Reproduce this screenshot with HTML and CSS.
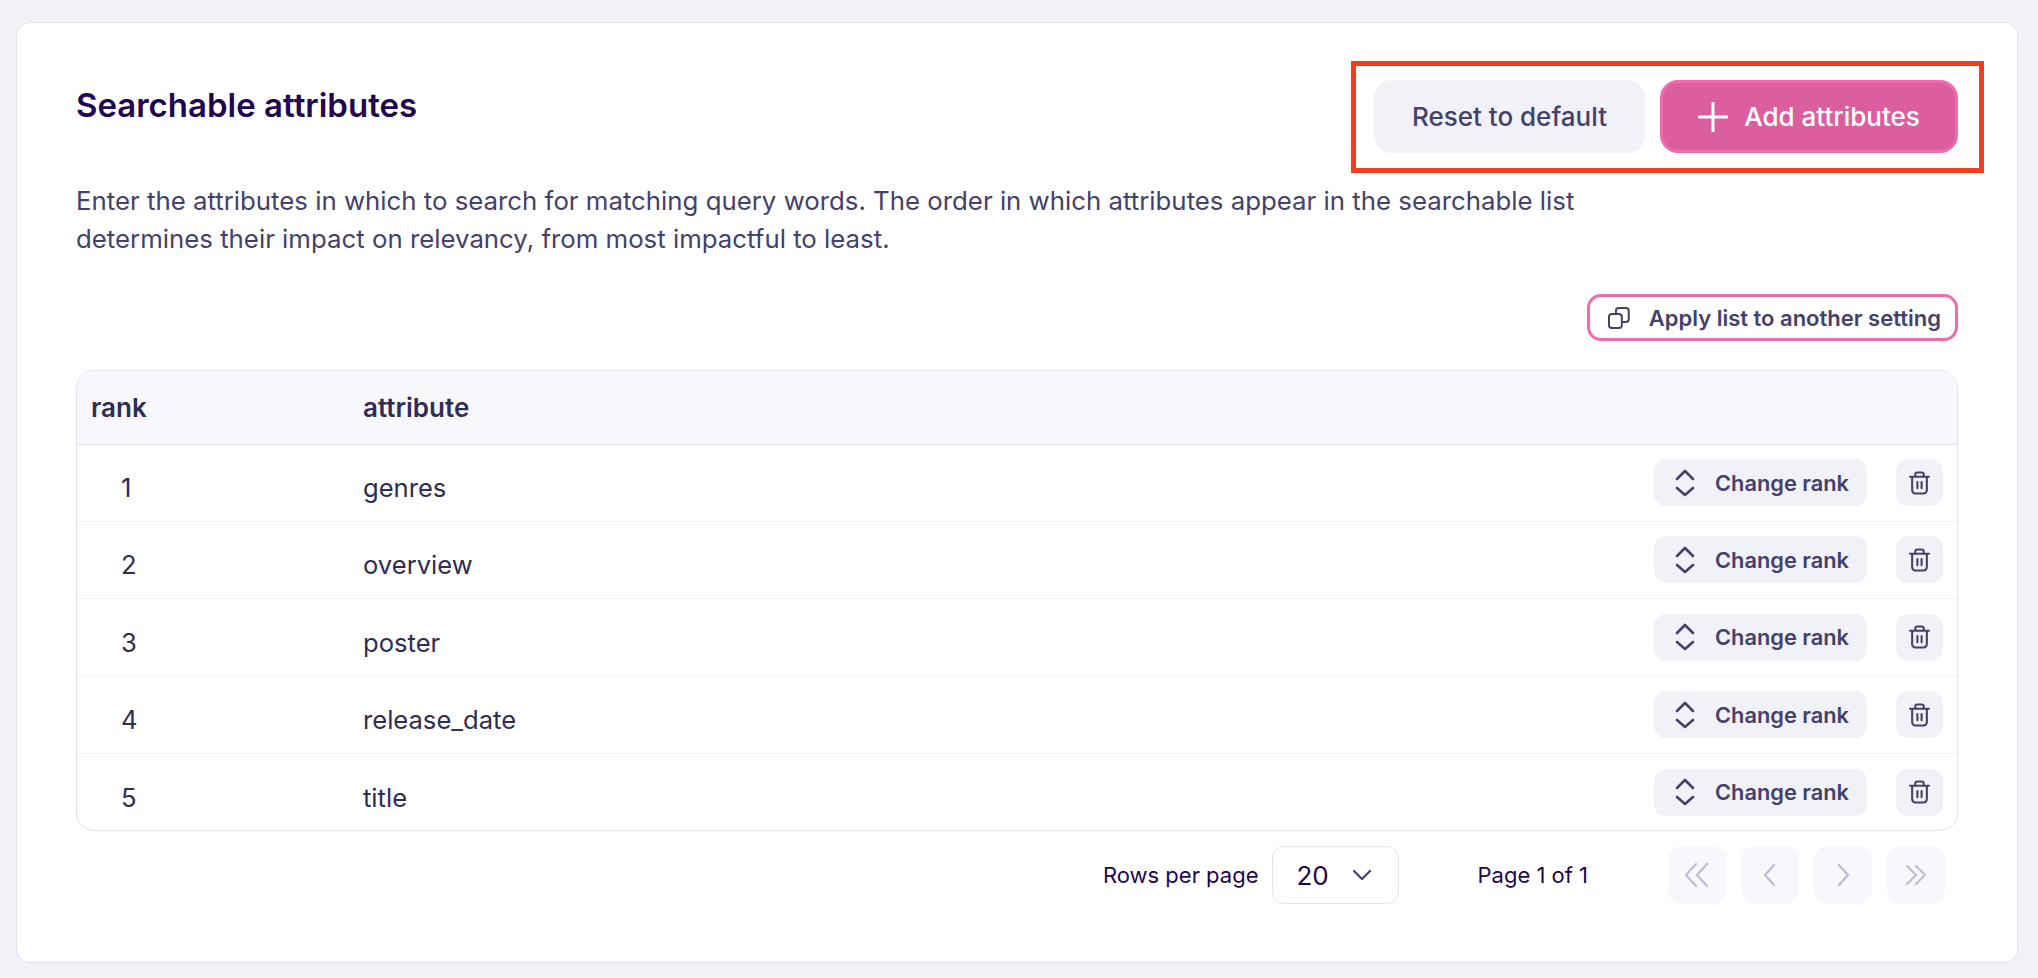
FILE: index.html
```html
<!DOCTYPE html>
<html lang="en">
<head>
    <meta charset="UTF-8">
    <title>Searchable attributes</title>
    <link rel="stylesheet" href="styles.css">
</head>
<body>
    <div class="card">
        <div class="card-head">
            <h2 class="title">Searchable attributes</h2>
            <div class="actions">
                <button class="btn btn-reset">Reset to default</button>
                <button class="btn btn-add">
                    <svg class="icon-plus" viewBox="0 0 30 30"><path d="M15 1v28M1 15h28"/></svg>
                    Add attributes
                </button>
            </div>
        </div>
        <p class="desc">Enter the attributes in which to search for matching query words. The order in which attributes appear in the searchable list determines their impact on relevancy, from most impactful to least.</p>
        <div class="apply-row">
            <button class="btn-apply">
                <svg class="icon-copy" viewBox="0 0 24 24"><rect x="2" y="8" width="13" height="14" rx="3"/><path d="M9 8V5a3 3 0 0 1 3-3h7a3 3 0 0 1 3 3v8a3 3 0 0 1-3 3h-4"/></svg>
                Apply list to another setting
            </button>
        </div>
        <div class="table-wrap">
            <table class="attr-table">
                <thead>
                    <tr><th class="col-rank">rank</th><th>attribute</th><th></th></tr>
                </thead>
                <tbody>
                    <tr>
                        <td class="cell-rank">1</td><td class="cell-name">genres</td>
                        <td><div class="row-actions">
                            <button class="btn-rank"><svg class="icon-updown" viewBox="0 0 20 28"><path d="M2 10l8-8 8 8M2 19l8 7 8-7"/></svg>Change rank</button>
                            <button class="btn-trash"><svg class="icon-trash" viewBox="0 0 20 22"><path d="M1 5h18M6 5V3a2 2 0 0 1 2-2h4a2 2 0 0 1 2 2v2M3 5v13a3 3 0 0 0 3 3h8a3 3 0 0 0 3-3V5M8 10v6M12 10v6"/></svg></button>
                        </div></td>
                    </tr>
                    <tr>
                        <td class="cell-rank">2</td><td class="cell-name">overview</td>
                        <td><div class="row-actions">
                            <button class="btn-rank"><svg class="icon-updown" viewBox="0 0 20 28"><path d="M2 10l8-8 8 8M2 19l8 7 8-7"/></svg>Change rank</button>
                            <button class="btn-trash"><svg class="icon-trash" viewBox="0 0 20 22"><path d="M1 5h18M6 5V3a2 2 0 0 1 2-2h4a2 2 0 0 1 2 2v2M3 5v13a3 3 0 0 0 3 3h8a3 3 0 0 0 3-3V5M8 10v6M12 10v6"/></svg></button>
                        </div></td>
                    </tr>
                    <tr>
                        <td class="cell-rank">3</td><td class="cell-name">poster</td>
                        <td><div class="row-actions">
                            <button class="btn-rank"><svg class="icon-updown" viewBox="0 0 20 28"><path d="M2 10l8-8 8 8M2 19l8 7 8-7"/></svg>Change rank</button>
                            <button class="btn-trash"><svg class="icon-trash" viewBox="0 0 20 22"><path d="M1 5h18M6 5V3a2 2 0 0 1 2-2h4a2 2 0 0 1 2 2v2M3 5v13a3 3 0 0 0 3 3h8a3 3 0 0 0 3-3V5M8 10v6M12 10v6"/></svg></button>
                        </div></td>
                    </tr>
                    <tr>
                        <td class="cell-rank">4</td><td class="cell-name">release_date</td>
                        <td><div class="row-actions">
                            <button class="btn-rank"><svg class="icon-updown" viewBox="0 0 20 28"><path d="M2 10l8-8 8 8M2 19l8 7 8-7"/></svg>Change rank</button>
                            <button class="btn-trash"><svg class="icon-trash" viewBox="0 0 20 22"><path d="M1 5h18M6 5V3a2 2 0 0 1 2-2h4a2 2 0 0 1 2 2v2M3 5v13a3 3 0 0 0 3 3h8a3 3 0 0 0 3-3V5M8 10v6M12 10v6"/></svg></button>
                        </div></td>
                    </tr>
                    <tr>
                        <td class="cell-rank">5</td><td class="cell-name">title</td>
                        <td><div class="row-actions">
                            <button class="btn-rank"><svg class="icon-updown" viewBox="0 0 20 28"><path d="M2 10l8-8 8 8M2 19l8 7 8-7"/></svg>Change rank</button>
                            <button class="btn-trash"><svg class="icon-trash" viewBox="0 0 20 22"><path d="M1 5h18M6 5V3a2 2 0 0 1 2-2h4a2 2 0 0 1 2 2v2M3 5v13a3 3 0 0 0 3 3h8a3 3 0 0 0 3-3V5M8 10v6M12 10v6"/></svg></button>
                        </div></td>
                    </tr>
                </tbody>
            </table>
        </div>
        <div class="pager">
            <span class="pager-label">Rows per page</span>
            <div class="page-size">
                <span>20</span>
                <svg class="icon-down" viewBox="0 0 20 12"><path d="M2 2l8 8 8-8"/></svg>
            </div>
            <span class="pager-count">Page 1 of 1</span>
            <div class="pager-nav">
                <button class="nav-btn"><svg viewBox="0 0 28 28"><path d="M13 3L3 14l10 11M24 3L14 14l10 11"/></svg></button>
                <button class="nav-btn"><svg viewBox="0 0 28 28"><path d="M18 4L9 14l9 10"/></svg></button>
                <button class="nav-btn"><svg viewBox="0 0 28 28"><path d="M10 4l9 10-9 10"/></svg></button>
                <button class="nav-btn"><svg viewBox="0 0 28 28"><path d="M5 5l9 9-9 9M14 5l9 9-9 9"/></svg></button>
            </div>
        </div>
    </div>
</body>
</html>
```

FILE: styles.css
```css
* {
    box-sizing: border-box;
}
body {
    font-family: Inter, "Liberation Sans", sans-serif;
    margin: 0;
    padding: 22px 20px 15px 16px;
    height: 978px;
    background-color: #f1f1f8;
    overflow: hidden;
}
button {
    font-family: inherit;
    cursor: pointer;
}
svg {
    fill: none;
    stroke: currentColor;
    stroke-linecap: round;
    stroke-linejoin: round;
}
.card {
    height: 941px;
    padding: 38px 59px 0;
    background-color: #fff;
    border: 1px solid #e3e3f0;
    border-radius: 14px;
}
.card-head {
    display: flex;
    justify-content: space-between;
    align-items: flex-start;
}
.title {
    margin: 24px 0 0;
    font-size: 33px;
    line-height: 40px;
    font-weight: 600;
    color: #22054f;
}
.actions {
    display: flex;
    gap: 15px;
    margin-right: -26px;
    padding: 14px 21px 15px 18px;
    border: 5px solid #f03e1f;
}
.btn {
    display: flex;
    align-items: center;
    justify-content: center;
    height: 73px;
    font-size: 26px;
    font-weight: 500;
    border-radius: 18px;
}
.btn-reset {
    width: 271px;
    border: 0;
    color: #45416b;
    background-color: #f1f1f8;
}
.btn-add {
    width: 298px;
    gap: 16px;
    color: #fff;
    background-color: #db5f9f;
    border: 3px solid #f06bab;
}
.icon-plus {
    width: 30px;
    height: 30px;
    stroke-width: 3;
}
.desc {
    width: 1530px;
    margin: 9px 0 0;
    font-size: 25.8px;
    line-height: 38px;
    color: #45416b;
}
.apply-row {
    display: flex;
    justify-content: flex-end;
    margin-top: 36px;
}
.btn-apply {
    display: flex;
    align-items: center;
    width: 371px;
    height: 47px;
    padding: 0 14px 0 17px;
    gap: 18px;
    font-size: 22px;
    font-weight: 600;
    color: #45416b;
    background-color: #fff;
    border: 3px solid #f06bab;
    border-radius: 14px;
    white-space: nowrap;
}
.icon-copy {
    width: 24px;
    height: 24px;
    stroke-width: 2;
}
.table-wrap {
    margin-top: 29px;
    border: 1px solid #e3e3f0;
    border-radius: 18px;
    overflow: hidden;
}
.attr-table {
    width: 100%;
    border-collapse: collapse;
    font-size: 25.6px;
    color: #2f2c55;
}
.attr-table th {
    height: 73px;
    padding: 0;
    text-align: left;
    font-size: 26px;
    font-weight: 600;
    background-color: #f8f8fc;
    border-bottom: 1px solid #e3e3f0;
}
.attr-table .col-rank {
    width: 286px;
    padding-left: 14px;
}
.attr-table td {
    height: 77.3px;
    padding: 0;
    border-bottom: 1px solid #f1f1f8;
}
.attr-table tbody tr:last-child td {
    border-bottom: 0;
}
.attr-table .cell-rank {
    padding: 10px 0 0 44px;
}
.attr-table .cell-name {
    padding-top: 10px;
}
.row-actions {
    display: flex;
    justify-content: flex-end;
    gap: 29px;
    padding: 0 14px 0 0;
}
.btn-rank {
    display: flex;
    align-items: center;
    width: 213px;
    height: 47px;
    padding: 0 0 0 21px;
    gap: 20px;
    font-size: 21.8px;
    font-weight: 600;
    color: #45416b;
    background-color: #f1f1f8;
    border: 0;
    border-radius: 12px;
    white-space: nowrap;
}
.icon-updown {
    width: 20px;
    height: 28px;
    stroke-width: 2.6;
}
.btn-trash {
    display: flex;
    align-items: center;
    justify-content: center;
    width: 47px;
    height: 47px;
    padding: 0;
    color: #45416b;
    background-color: #f1f1f8;
    border: 0;
    border-radius: 12px;
}
.icon-trash {
    width: 21px;
    height: 24px;
    stroke-width: 2;
}
.pager {
    display: flex;
    align-items: center;
    justify-content: flex-end;
    margin-top: 15px;
    color: #22054f;
    font-size: 22px;
}
.pager-label {
    margin-right: 14px;
}
.page-size {
    display: flex;
    align-items: center;
    justify-content: space-between;
    width: 127px;
    height: 58px;
    padding: 0 26px 0 23px;
    font-size: 26px;
    border: 1px solid #e3e3f0;
    border-radius: 12px;
}
.icon-down {
    width: 20px;
    height: 12px;
    stroke-width: 2.2;
    color: #45416b;
}
.pager-count {
    margin: 0 80px 0 78px;
}
.pager-nav {
    display: flex;
    gap: 15px;
    margin-right: 13px;
}
.nav-btn {
    display: flex;
    align-items: center;
    justify-content: center;
    width: 58px;
    height: 58px;
    padding: 0;
    color: #c0bddb;
    background-color: #f8f8fc;
    border: 0;
    border-radius: 14px;
}
.nav-btn svg {
    width: 28px;
    height: 28px;
    stroke-width: 2.4;
}
```
